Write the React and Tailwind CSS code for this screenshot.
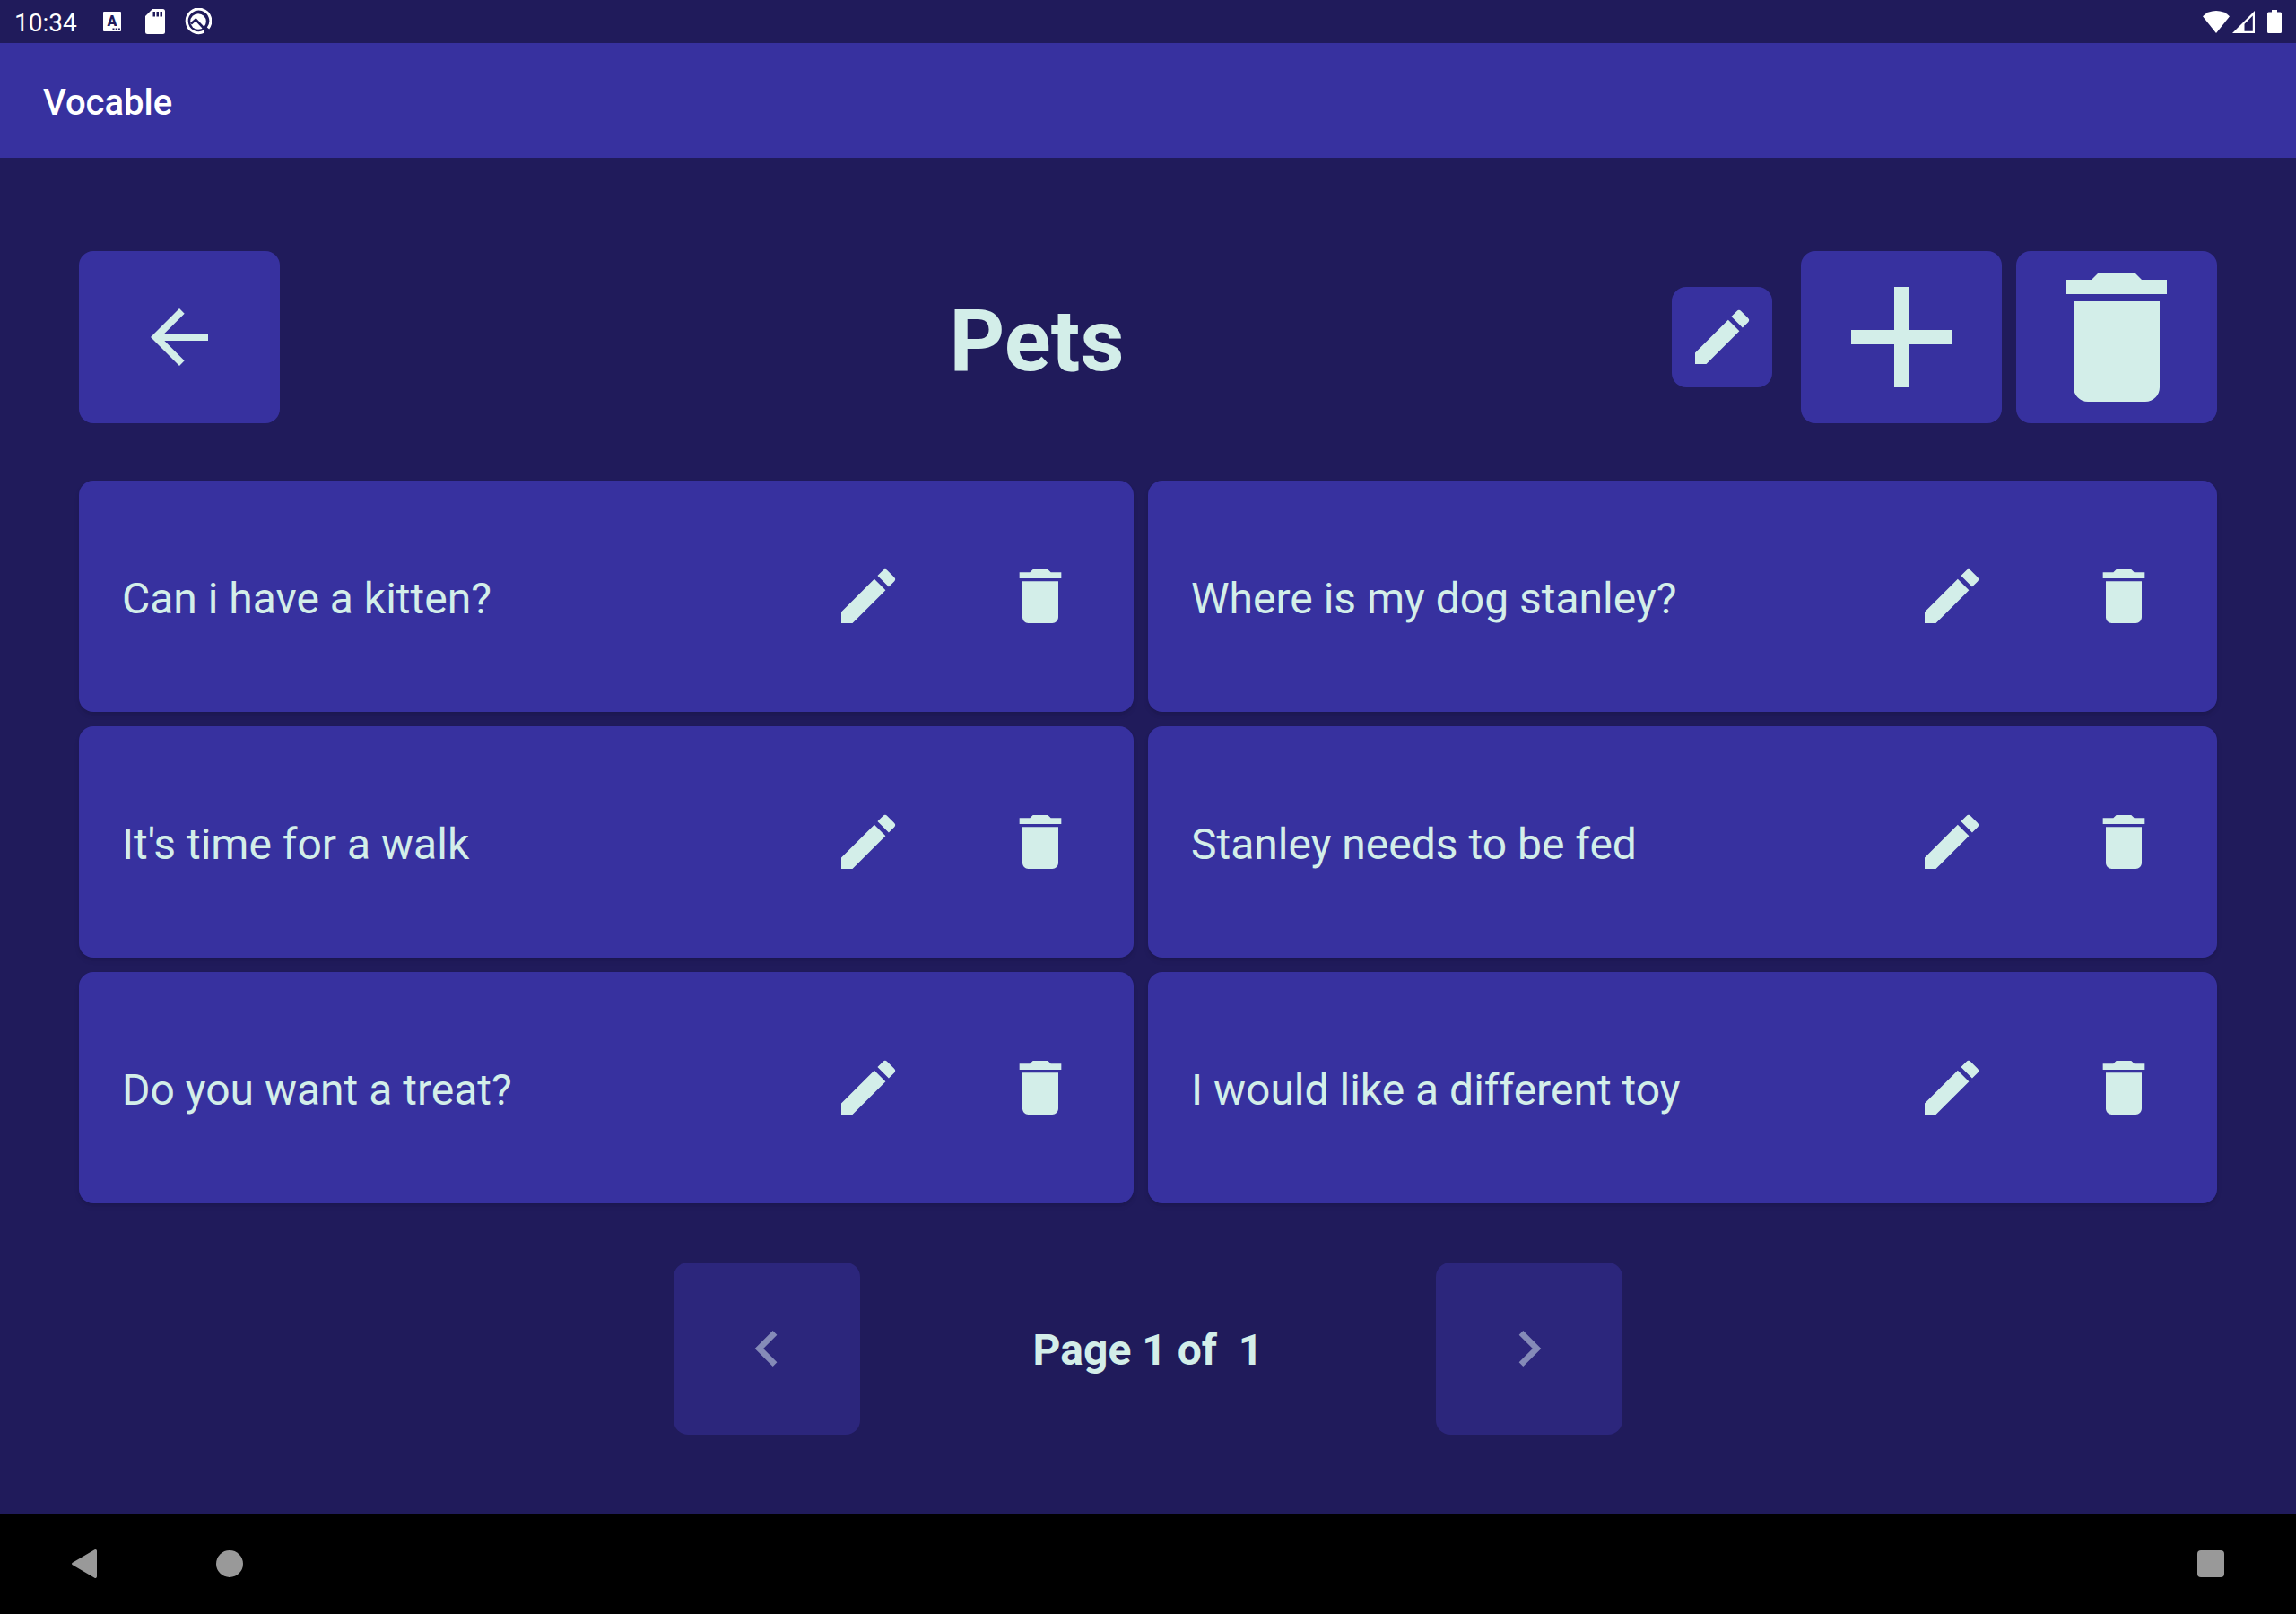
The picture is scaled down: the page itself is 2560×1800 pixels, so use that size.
import { MdAdd, MdArrowBack, MdChevronLeft, MdChevronRight, MdDelete, MdEdit } from "react-icons/md";

const phrases = [
  { id: 1, text: "Can i have a kitten?" },
  { id: 2, text: "Where is my dog stanley?" },
  { id: 3, text: "It's time for a walk" },
  { id: 4, text: "Stanley needs to be fed" },
  { id: 5, text: "Do you want a treat?" },
  { id: 6, text: "I would like a different toy" },
];

const StatusBar = () => (
  <div className="flex h-12 items-center justify-between px-4 text-white">
    <div className="flex items-center">
      <span className="w-[99px] pt-1 text-[28px] leading-8">10:34</span>

      {/* keyboard */}
      <svg className="h-[22px] w-5" viewBox="0 0 20 22">
        <rect width="20" height="22" rx="1" fill="#fff" />
        <text x="10" y="16" textAnchor="middle" className="text-[16px] font-black" fill="#201b5b">A</text>
        <path d="M10.500 18.500h2v2h-2zM13.700 18.500h2v2h-2zM16.900 18.500h2v2h-2z" fill="#201b5b" />
      </svg>

      {/* sd card */}
      <svg className="ml-[27px] h-7 w-[22px]" viewBox="0 0 22 28">
        <path d="M8 0h11.500a2.500 2.500 0 0 1 2.500 2.500v23a2.500 2.500 0 0 1-2.500 2.500h-17A2.500 2.500 0 0 1 0 25.500V8z" fill="#fff" />
        <path d="M8.500 3h2.500v5.500H8.500zM12.500 3H15v5.500h-2.500zM16.500 3H19v5.500h-2.500z" fill="#201b5b" />
      </svg>

      {/* debugger */}
      <svg className="ml-[22px] h-[30px] w-[30px]" viewBox="0 0 30 30">
        <path d="M21.500 26.200A13.300 13.300 0 1 1 26 22.500" fill="none" stroke="#fff" strokeWidth="3" />
        <circle cx="15" cy="15" r="8.800" fill="#fff" />
        <path d="M7 17.500 12.300 12.800 24.500 26" fill="none" stroke="#201b5b" strokeWidth="2.600" />
      </svg>
    </div>

    <div className="flex items-center">
      <svg className="h-[25px] w-[30px]" viewBox="0 0 30 25">
        <path d="M15 25 0 6.200C4 2.200 9 0 15 0s11 2.200 15 6.200z" fill="#fff" />
      </svg>
      <svg className="ml-[3px] h-[25px] w-[25px]" viewBox="0 0 25 25">
        <path d="M25 0v25H0zM22.800 5.500 13.500 14.800v8h9.300z" fill="#fff" fillRule="evenodd" />
      </svg>
      <svg className="ml-3.5 h-[26px] w-4" viewBox="0 0 16 26">
        <path d="M5 0h6v2.500h3.500A1.500 1.500 0 0 1 16 4v20.500a1.500 1.500 0 0 1-1.500 1.500h-13A1.500 1.500 0 0 1 0 24.500V4a1.500 1.500 0 0 1 1.500-1.500H5z" fill="#fff" />
      </svg>
    </div>
  </div>
);

const PhraseCard = ({ text }) => (
  <li className="flex items-center rounded-2xl bg-[#37319f] pl-12 pr-2 shadow-md">
    <span className="flex-1 pt-1.5 text-[48px] leading-14">{text}</span>
    <button type="button" aria-label={`Edit ${text}`} className="flex h-full w-48 items-center justify-center">
      <MdEdit className="size-20" />
    </button>
    <button type="button" aria-label={`Delete ${text}`} className="flex h-full w-48 items-center justify-center">
      <MdDelete className="size-20" />
    </button>
  </li>
);

const NavigationBar = () => (
  <nav className="flex h-28 items-center justify-between bg-black px-20">
    <div className="flex items-center gap-[133px]">
      <button type="button" aria-label="Back">
        <svg className="h-8 w-7" viewBox="0 0 28 32">
          <path d="M25.500.3a1.700 1.700 0 0 1 2.500 1.500v28.400a1.700 1.700 0 0 1-2.500 1.500L.8 17.300a1.500 1.500 0 0 1 0-2.600z" fill="#999" />
        </svg>
      </button>
      <button type="button" aria-label="Home" className="size-[30px] rounded-full bg-[#999]" />
    </div>
    <button type="button" aria-label="Overview" className="size-[30px] rounded-sm bg-[#999]" />
  </nav>
);

export default function App() {
  return (
    <div className="flex min-h-screen flex-col bg-[#201b5b] font-[Roboto,sans-serif] text-[#d3eee9]">
      <StatusBar />

      <header className="flex h-32 items-center bg-[#37319f] px-12">
        <span className="pt-1.5 text-[40px] font-medium leading-12 text-white">Vocable</span>
      </header>

      <main className="flex flex-1 flex-col px-22 pb-22 pt-26">

        {/* Category toolbar */}
        <div className="flex items-center">
          <button type="button" aria-label="Go back" className="flex h-48 w-56 items-center justify-center rounded-2xl bg-[#37319f]">
            <MdArrowBack className="size-24" />
          </button>
          <h1 className="flex-1 pl-34 pt-2 text-center text-[96px] font-bold leading-28">Pets</h1>
          <button type="button" aria-label="Rename category" className="flex size-28 items-center justify-center rounded-2xl bg-[#37319f]">
            <MdEdit className="size-20" />
          </button>
          <button type="button" aria-label="Add phrase" className="ml-8 flex h-48 w-56 items-center justify-center rounded-2xl bg-[#37319f]">
            <MdAdd className="size-48" />
          </button>
          <button type="button" aria-label="Delete category" className="ml-4 flex h-48 w-56 items-center justify-center rounded-2xl bg-[#37319f]">
            <MdDelete className="size-48" />
          </button>
        </div>

        {/* Phrases */}
        <ul className="mt-16 grid flex-1 auto-rows-fr grid-cols-[147fr_149fr] gap-4">
          {phrases.map((phrase) => (
            <PhraseCard key={phrase.id} text={phrase.text} />
          ))}
        </ul>

        {/* Pagination */}
        <div className="mt-[66px] flex items-center justify-center">
          <button type="button" disabled aria-label="Previous page" className="flex h-48 w-52 items-center justify-center rounded-2xl bg-[#2c267c] text-[#858bb8]">
            <MdChevronLeft className="size-20" />
          </button>
          <span className="w-[642px] whitespace-pre pt-1 text-center text-[48px] font-bold leading-14">Page 1 of  1</span>
          <button type="button" disabled aria-label="Next page" className="flex h-48 w-52 items-center justify-center rounded-2xl bg-[#2c267c] text-[#858bb8]">
            <MdChevronRight className="size-20" />
          </button>
        </div>
      </main>

      <NavigationBar />
    </div>
  );
}
